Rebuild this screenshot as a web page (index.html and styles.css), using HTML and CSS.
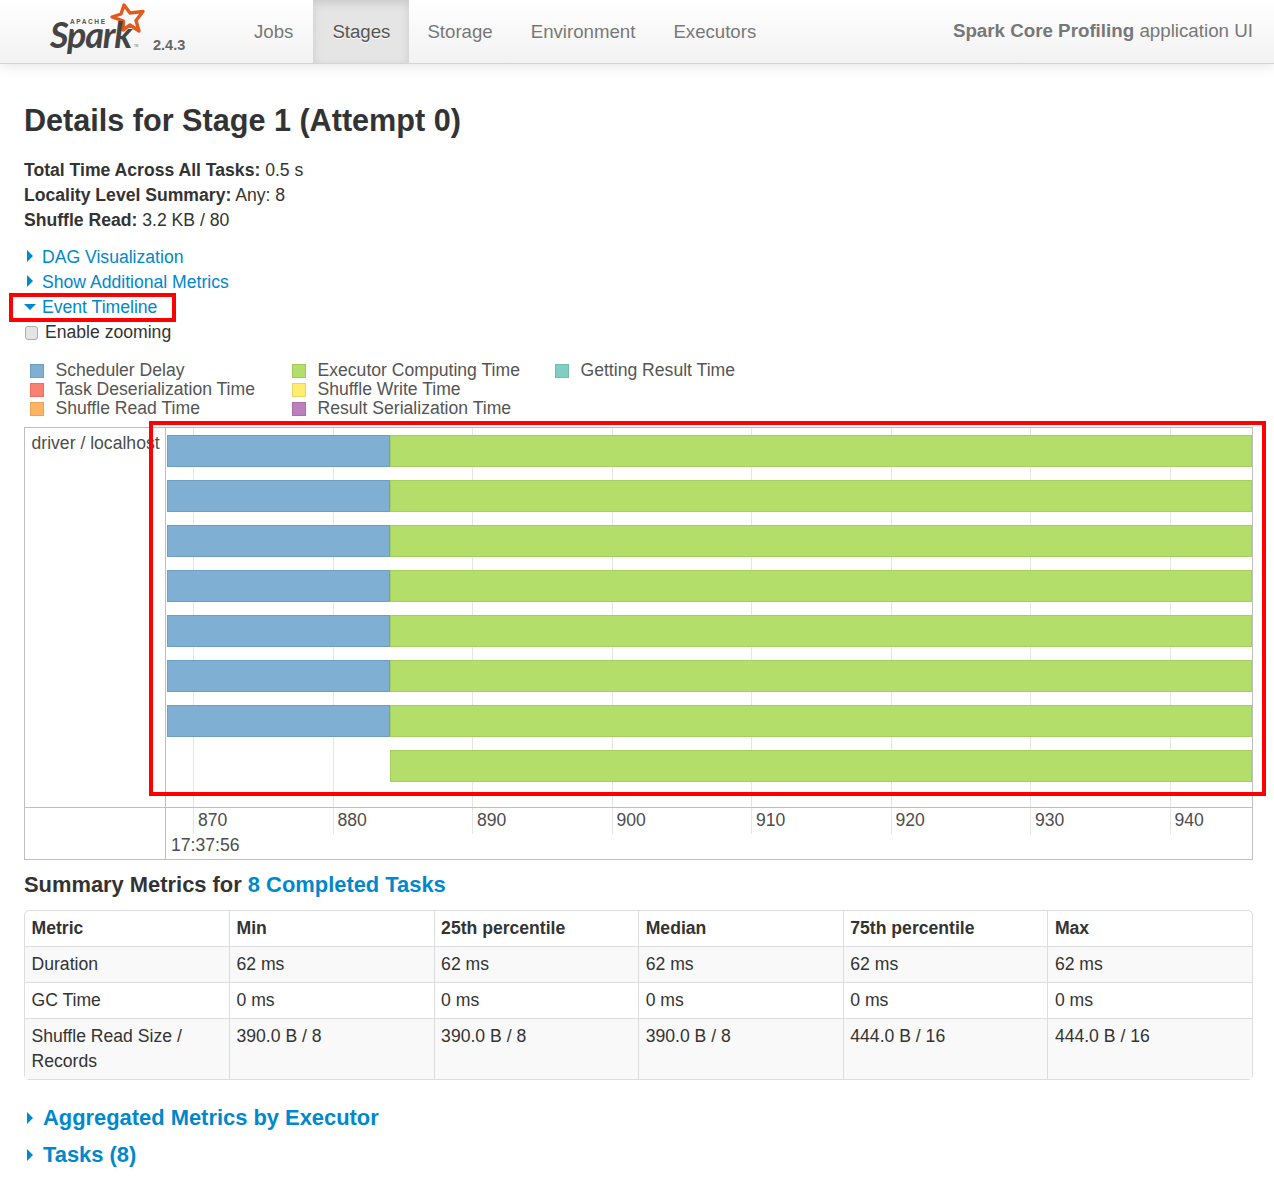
FILE: index.html
```html
<!DOCTYPE html>
<html lang="en">
<head>
  <meta charset="UTF-8" />
  <title>Spark Core Profiling - Details for Stage 1 (Attempt 0)</title>
  <link rel="stylesheet" href="styles.css">
</head>
<body>

  <div class="navbar">
    <a class="brand">
      <svg class="star" viewBox="0 0 45 40" width="45" height="40">
        <path d="M19 5 L25 13 L38 11.5 L31 20.5 L34 31 L25 25 L18 30 L18.5 21 L7 17 L16 14 Z" fill="none" stroke="#e25a1c" stroke-width="3.4" stroke-linejoin="round"/>
      </svg>
      <span class="spark">Spark</span>
      <span class="apache">APACHE</span>
      <span class="tm">TM</span>
    </a>
    <span class="version">2.4.3</span>
    <ul class="nav">
      <li>Jobs</li>
      <li class="active">Stages</li>
      <li>Storage</li>
      <li>Environment</li>
      <li>Executors</li>
    </ul>
    <p class="app-title"><strong>Spark Core Profiling</strong> application UI</p>
  </div>

  <div class="content">
    <h3 class="page-title">Details for Stage 1 (Attempt 0)</h3>

    <ul class="stats">
      <li><strong>Total Time Across All Tasks:</strong> 0.5 s</li>
      <li><strong>Locality Level Summary:</strong> Any: 8</li>
      <li><strong>Shuffle Read:</strong> 3.2 KB / 80</li>
    </ul>

    <div class="toggles">
      <a class="toggle"><span class="arrow-right"></span>DAG Visualization</a>
      <a class="toggle"><span class="arrow-right"></span>Show Additional Metrics</a>
      <a class="toggle"><span class="arrow-down"></span>Event Timeline</a>
      <label class="zoom-check"><input type="checkbox">Enable zooming</label>
    </div>

    <div class="legend">
      <div class="legend-item"><span class="swatch blue"></span>Scheduler Delay</div>
      <div class="legend-item"><span class="swatch green"></span>Executor Computing Time</div>
      <div class="legend-item"><span class="swatch teal"></span>Getting Result Time</div>
      <div class="legend-item"><span class="swatch red"></span>Task Deserialization Time</div>
      <div class="legend-item"><span class="swatch yellow"></span>Shuffle Write Time</div>
      <div></div>
      <div class="legend-item"><span class="swatch orange"></span>Shuffle Read Time</div>
      <div class="legend-item"><span class="swatch purple"></span>Result Serialization Time</div>
    </div>

    <div class="timeline">
      <div class="group-label">driver / localhost</div>
      <div class="chart">
        <i class="gridline g1"></i><i class="gridline g2"></i><i class="gridline g3"></i><i class="gridline g4"></i>
        <i class="gridline g5"></i><i class="gridline g6"></i><i class="gridline g7"></i><i class="gridline g8"></i>
        <div class="task"><span class="bar-delay"></span><span class="bar-run"></span></div>
        <div class="task"><span class="bar-delay"></span><span class="bar-run"></span></div>
        <div class="task"><span class="bar-delay"></span><span class="bar-run"></span></div>
        <div class="task"><span class="bar-delay"></span><span class="bar-run"></span></div>
        <div class="task"><span class="bar-delay"></span><span class="bar-run"></span></div>
        <div class="task"><span class="bar-delay"></span><span class="bar-run"></span></div>
        <div class="task"><span class="bar-delay"></span><span class="bar-run"></span></div>
        <div class="task"><span class="bar-none"></span><span class="bar-run"></span></div>
      </div>
      <div class="axis-left"></div>
      <div class="axis">
        <div class="ticks">
          <span class="tick">870</span><span class="tick">880</span><span class="tick">890</span><span class="tick">900</span>
          <span class="tick">910</span><span class="tick">920</span><span class="tick">930</span><span class="tick">940</span>
        </div>
        <div class="axis-date">17:37:56</div>
      </div>
    </div>

    <h4 class="summary-title">Summary Metrics for <a>8 Completed Tasks</a></h4>

    <table class="metrics">
      <thead>
        <tr><th>Metric</th><th>Min</th><th>25th percentile</th><th>Median</th><th>75th percentile</th><th>Max</th></tr>
      </thead>
      <tbody>
        <tr class="odd"><td>Duration</td><td>62 ms</td><td>62 ms</td><td>62 ms</td><td>62 ms</td><td>62 ms</td></tr>
        <tr><td>GC Time</td><td>0 ms</td><td>0 ms</td><td>0 ms</td><td>0 ms</td><td>0 ms</td></tr>
        <tr class="odd"><td>Shuffle Read Size / Records</td><td>390.0 B / 8</td><td>390.0 B / 8</td><td>390.0 B / 8</td><td>444.0 B / 16</td><td>444.0 B / 16</td></tr>
      </tbody>
    </table>

    <h4 class="section-link first"><span class="arrow-right"></span>Aggregated Metrics by Executor</h4>
    <h4 class="section-link"><span class="arrow-right"></span>Tasks (8)</h4>
  </div>

  <!-- annotation boxes drawn on top of the screenshot -->
  <div class="mark mark-toggle"></div>
  <div class="mark mark-chart"></div>

</body>
</html>
```

FILE: styles.css
```css
html, body {
  margin: 0;
  padding: 0;
}

body {
  position: relative;
  background: #fff;
  color: #333;
  font-family: "Liberation Sans", Arial, sans-serif;
  font-size: 17.6px;
  line-height: 25px;
  height: 1184px;
  overflow: hidden;
}

a {
  color: #0088cc;
}

/* navbar */
.navbar {
  display: flex;
  height: 63px;
  background: linear-gradient(to bottom, #ffffff, #f2f2f2);
  border-bottom: 1px solid #d4d4d4;
  box-shadow: 0 2px 12px rgba(0, 0, 0, 0.1);
}

.brand {
  position: relative;
  display: block;
  width: 153px;
  flex: none;
}

.star {
  position: absolute;
  left: 105px;
  top: 0;
}

.apache {
  position: absolute;
  left: 70px;
  top: 18px;
  font-size: 6.5px;
  line-height: 8px;
  font-weight: bold;
  letter-spacing: 1.6px;
  color: #555;
}

.spark {
  position: absolute;
  left: 50px;
  top: 20px;
  font-family: Lato, "Liberation Sans", sans-serif;
  font-size: 36px;
  line-height: 28px;
  font-style: italic;
  font-weight: bold;
  letter-spacing: -1.2px;
  color: #444;
}

.tm {
  position: absolute;
  left: 134px;
  top: 44px;
  font-size: 3px;
  line-height: 4px;
  color: #666;
}

.version {
  flex: none;
  width: 82px;
  margin-top: 33px;
  font-size: 14.5px;
  line-height: 25px;
  font-weight: bold;
  color: #666;
}

.nav {
  display: flex;
  list-style: none;
  margin: 0;
  padding: 0;
  flex: 1;
}

.nav li {
  padding: 0 19px;
  line-height: 63px;
  font-size: 18.65px;
  color: #777;
  text-shadow: 0 1px 0 #fff;
}

.nav li.active {
  margin: 0 -1px 0 1px;
  background: #e5e5e5;
  color: #555;
  box-shadow: inset 0 3px 8px rgba(0, 0, 0, 0.125);
}

.app-title {
  margin: 0;
  padding-right: 21px;
  line-height: 61px;
  font-size: 18.75px;
  color: #777;
}

/* page */
.content {
  padding: 0 21px 0 24px;
}

.page-title {
  margin: 0;
  padding-top: 36px;
  height: 58px;
  font-size: 30.6px;
  line-height: 40px;
  font-weight: bold;
}

.stats {
  list-style: none;
  margin: 0;
  padding: 0;
}

.stats strong {
  color: #333;
}

.toggles {
  margin-top: 12px;
}

.toggle {
  display: block;
  height: 25px;
}

.arrow-right,
.arrow-down {
  display: inline-block;
  width: 0;
  height: 0;
  vertical-align: 1px;
}

.arrow-right {
  border-left: 6px solid #0088cc;
  border-top: 6px solid transparent;
  border-bottom: 6px solid transparent;
  margin: 0 9px 0 3px;
}

.arrow-down {
  border-top: 6px solid #0088cc;
  border-left: 6px solid transparent;
  border-right: 6px solid transparent;
  margin: 0 6px 2px 0;
}

.zoom-check {
  display: flex;
  align-items: center;
  height: 25px;
}

.zoom-check input {
  appearance: none;
  box-sizing: border-box;
  width: 13px;
  height: 14px;
  margin: 0 7px 0 1px;
  background: #e4e4e4;
  border: 1px solid #adadad;
  border-radius: 3px;
}

.legend {
  display: grid;
  grid-template-columns: 262px 263px auto;
  grid-auto-rows: 19px;
  margin: 16px 0 9px 6px;
  line-height: 19px;
  color: #555;
}

.legend-item {
  display: flex;
  align-items: center;
}

.swatch {
  width: 12px;
  height: 12px;
  margin-right: 11.5px;
  border: 1px solid;
}

.blue { background: #7fb0d3; border-color: #6d9fc2; }
.green { background: #b3de69; border-color: #a0cb5c; }
.teal { background: #80cdc1; border-color: #70bcb0; }
.red { background: #fb8072; border-color: #e77063; }
.yellow { background: #ffed6f; border-color: #e6d560; }
.orange { background: #fdb462; border-color: #e6a458; }
.purple { background: #bc80bd; border-color: #a970aa; }

/* timeline */
.timeline {
  display: grid;
  grid-template-columns: 140px 1fr;
  grid-template-rows: 379px 52px;
  border: 1px solid #bfbfbf;
  color: #4d4d4d;
}

.group-label {
  padding: 3px 0 0 6.5px;
  white-space: nowrap;
}

.chart {
  position: relative;
  border-left: 1px solid #bfbfbf;
  padding: 7px 0 0 1px;
}

.gridline {
  position: absolute;
  top: 0;
  bottom: 0;
  width: 1px;
  background: #e5e5e5;
}

.g1 { left: 27px; }
.g2 { left: 167px; }
.g3 { left: 306px; }
.g4 { left: 446px; }
.g5 { left: 585px; }
.g6 { left: 725px; }
.g7 { left: 864px; }
.g8 { left: 1004px; }

.task {
  position: relative;
  display: flex;
  height: 32px;
  margin-bottom: 13px;
}

.task span {
  display: block;
  height: 32px;
  box-sizing: border-box;
}

.bar-delay {
  width: 223px;
  background: #7fb0d3;
  border: 1px solid #6d9fc2;
}

.bar-none {
  width: 223px;
}

.bar-run {
  flex: 1;
  background: #b3de69;
  border: 1px solid #a5cf60;
}

.axis-left {
  border-top: 1px solid #bfbfbf;
}

.axis {
  border-top: 1px solid #bfbfbf;
  border-left: 1px solid #bfbfbf;
}

.ticks {
  display: flex;
  padding-left: 27px;
  height: 26px;
}

.tick {
  flex: none;
  width: 139.5px;
  box-sizing: border-box;
  padding-left: 4px;
  border-left: 1px solid #e5e5e5;
  line-height: 25px;
}

.tick:last-child {
  width: 78px;
}

.axis-date {
  padding-left: 5px;
  line-height: 22px;
}

/* summary */
.summary-title {
  margin: 0;
  padding-top: 12px;
  height: 38px;
  font-size: 21.9px;
  line-height: 26px;
  font-weight: bold;
}

.metrics {
  width: 100%;
  box-sizing: border-box;
  table-layout: fixed;
  border-collapse: separate;
  border-spacing: 0;
  border: 1px solid #ddd;
  border-radius: 5px;
}

.metrics th,
.metrics td {
  padding: 5px 6.5px;
  text-align: left;
  vertical-align: top;
  border-left: 1px solid #ddd;
  border-top: 1px solid #ddd;
  line-height: 25px;
}

.metrics th:first-child,
.metrics td:first-child {
  border-left: none;
  width: 191px;
}

.metrics th {
  border-top: none;
  font-weight: bold;
}

.metrics .odd td {
  background: #f9f9f9;
}

.section-link {
  margin: 0;
  height: 37px;
  font-size: 21.9px;
  line-height: 37px;
  font-weight: bold;
  color: #0088cc;
}

.section-link.first {
  margin-top: 19px;
}

.section-link .arrow-right {
  margin-right: 10px;
}

/* red annotation boxes */
.mark {
  position: absolute;
  box-sizing: border-box;
  border: 4px solid #fe0000;
}

.mark-toggle {
  left: 9px;
  top: 293px;
  width: 167px;
  height: 29px;
}

.mark-chart {
  left: 149px;
  top: 421px;
  width: 1117px;
  height: 375px;
}
```
